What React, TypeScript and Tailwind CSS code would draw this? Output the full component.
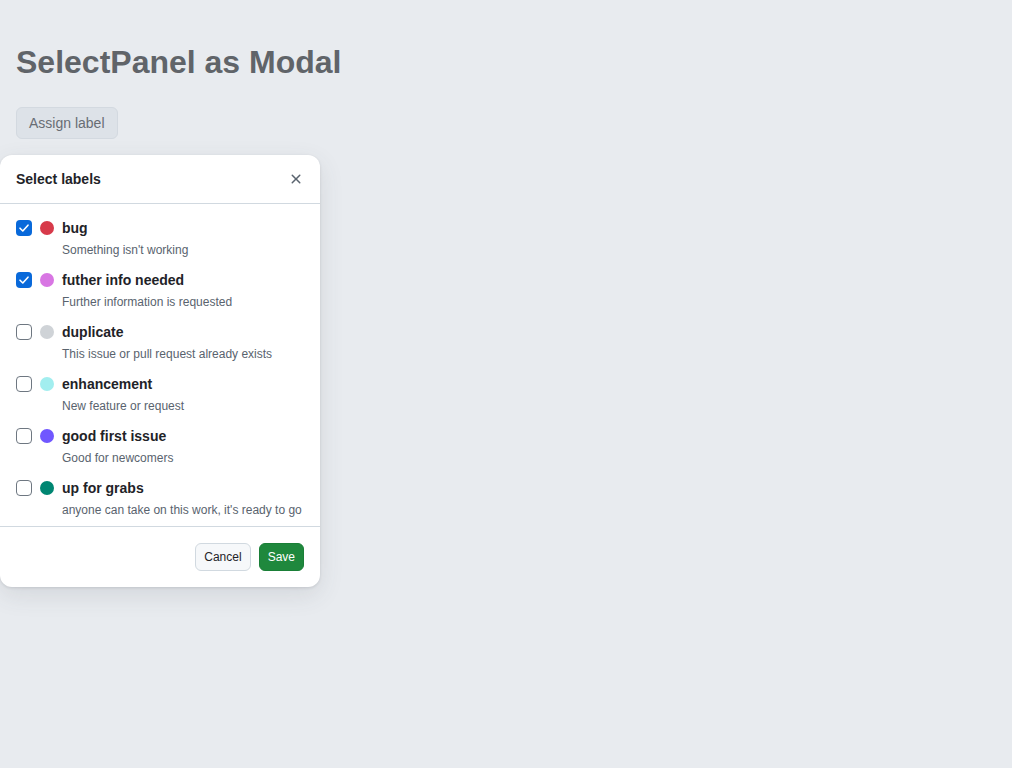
import React from "react";

const labels = [
  { name: "bug", desc: "Something isn't working", color: "bg-[#d73a4a]", checked: true },
  { name: "futher info needed", desc: "Further information is requested", color: "bg-[#d876e3]", checked: true },
  { name: "duplicate", desc: "This issue or pull request already exists", color: "bg-[#cfd3d7]", checked: false },
  { name: "enhancement", desc: "New feature or request", color: "bg-[#a2eeef]", checked: false },
  { name: "good first issue", desc: "Good for newcomers", color: "bg-[#7057ff]", checked: false },
  { name: "up for grabs", desc: "anyone can take on this work, it's ready to go", color: "bg-[#008672]", checked: false },
];

function Check({ checked }: { checked: boolean }) {
  if (checked) {
    return (
      <span className="flex h-4 w-4 shrink-0 items-center justify-center rounded-[4px] bg-[#0969da]">
        <svg width="12" height="12" viewBox="0 0 12 12" fill="none">
          <path d="M2 6.2 L4.8 9 L10 3.2" stroke="white" strokeWidth="1.6" strokeLinecap="round" strokeLinejoin="round" />
        </svg>
      </span>
    );
  }
  return <span className="h-4 w-4 shrink-0 rounded-[4px] border border-[#6e7781] bg-white" />;
}

export default function App() {
  return (
    <div className="min-h-[768px] bg-[#e8ebef] pt-[42px] font-['Liberation_Sans',Arial,sans-serif]">
      <h1 className="px-4 text-[32px] font-bold leading-[40px] text-[#606469]">SelectPanel as Modal</h1>
      <div className="mt-[25px] px-4">
        <button className="h-8 rounded-md border border-[#d3d9e0] bg-[#dde2e8] px-3 text-sm text-[#686d74]">
          Assign label
        </button>
      </div>
      <div className="mt-4 w-[320px] rounded-xl bg-white shadow-[0_8px_24px_rgba(66,74,83,0.12),0_1px_3px_rgba(31,35,40,0.12)]">
        <div className="flex h-[49px] items-center justify-between border-b border-[#d1d9e0] pl-4 pr-2">
          <span className="text-sm font-bold text-[#1f2328]">Select labels</span>
          <button className="flex h-8 w-8 items-center justify-center text-[#59636e]">
            <svg width="16" height="16" viewBox="0 0 16 16" fill="currentColor">
              <path d="M3.72 3.72a.75.75 0 0 1 1.06 0L8 6.94l3.22-3.22a.749.749 0 0 1 1.275.326.749.749 0 0 1-.215.734L9.06 8l3.22 3.22a.749.749 0 0 1-.326 1.275.749.749 0 0 1-.734-.215L8 9.06l-3.22 3.22a.751.751 0 0 1-1.042-.018.751.751 0 0 1-.018-1.042L6.94 8 3.72 4.78a.75.75 0 0 1 0-1.06Z" />
            </svg>
          </button>
        </div>
        <div className="pt-2 pb-[2px]">
          {labels.map((l) => (
            <div key={l.name} className="px-4 pt-[6px] pb-[5px]">
              <div className="flex h-5 items-center gap-2">
                <Check checked={l.checked} />
                <span className={`h-[14px] w-[14px] shrink-0 rounded-full ${l.color}`} />
                <span className="text-sm font-bold leading-5 text-[#1f2328]">{l.name}</span>
              </div>
              <div className="mt-[3px] pl-[46px] text-xs leading-[18px] text-[#59636e]">{l.desc}</div>
            </div>
          ))}
        </div>
        <div className="flex items-center justify-end gap-2 border-t border-[#d1d9e0] px-4 py-4">
          <button className="h-7 rounded-md border border-[#d1d9e0] bg-[#f6f8fa] px-2 text-xs text-[#1f2328]">Cancel</button>
          <button className="h-7 rounded-md border border-[#1a7f37] bg-[#1f883d] px-2 text-xs text-white">Save</button>
        </div>
      </div>
    </div>
  );
}
